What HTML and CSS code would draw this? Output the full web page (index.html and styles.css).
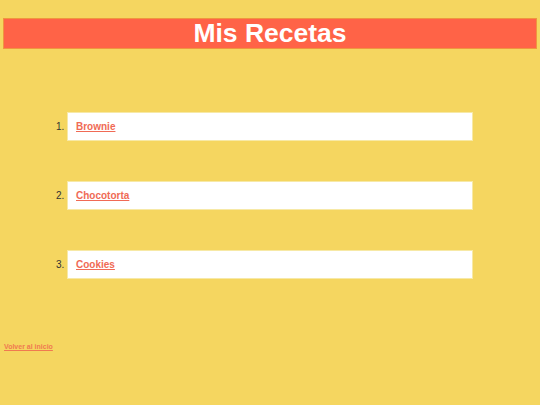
FILE: index.html
```html
<!DOCTYPE html>
<html lang="es">
<head>
<meta charset="utf-8">
<title>Mis Recetas</title>
<link rel="stylesheet" href="styles.css">
</head>
<body>
<header class="header">
  <h1 class="title">Mis Recetas</h1>
</header>
<ol class="recipes">
  <li class="recipe"><a class="recipe-link" href="#">Brownie</a></li>
  <li class="recipe"><a class="recipe-link" href="#">Chocotorta</a></li>
  <li class="recipe"><a class="recipe-link" href="#">Cookies</a></li>
</ol>
<a class="back" href="#">Volver al inicio</a>
</body>
</html>
```

FILE: styles.css
```css
html, body {
  margin: 0;
  padding: 0;
}
body {
  background: #f5d660;
  font-family: "Liberation Sans", Arial, sans-serif;
  width: 540px;
  height: 405px;
  padding-top: 18px;
  box-sizing: border-box;
}
.header {
  margin: 0 3px;
  background: #ff6347;
  border: 1px solid #f0953f;
  height: 31px;
  box-sizing: border-box;
  display: flex;
  align-items: center;
  justify-content: center;
}
.title {
  margin: 0;
  color: #ffffff;
  font-size: 26.5px;
  font-weight: bold;
  line-height: 1;
}
.recipes {
  list-style: decimal;
  margin: 63px 0 0 67px;
  padding: 0;
  width: 406px;
  display: flex;
  flex-direction: column;
  gap: 40px;
  font-size: 10px;
  color: #333333;
}
.recipe {
  background: #ffffff;
  border: 1px solid #f7e9a6;
  height: 29px;
  box-sizing: border-box;
  padding: 0 8px;
  line-height: 27px;
}
.recipe-link {
  color: #f06a55;
  font-weight: bold;
  text-decoration: underline;
}
.back {
  display: inline-block;
  margin: 64px 0 0 4px;
  color: #f07a50;
  font-size: 7px;
  font-weight: bold;
  text-decoration: underline;
}
```
